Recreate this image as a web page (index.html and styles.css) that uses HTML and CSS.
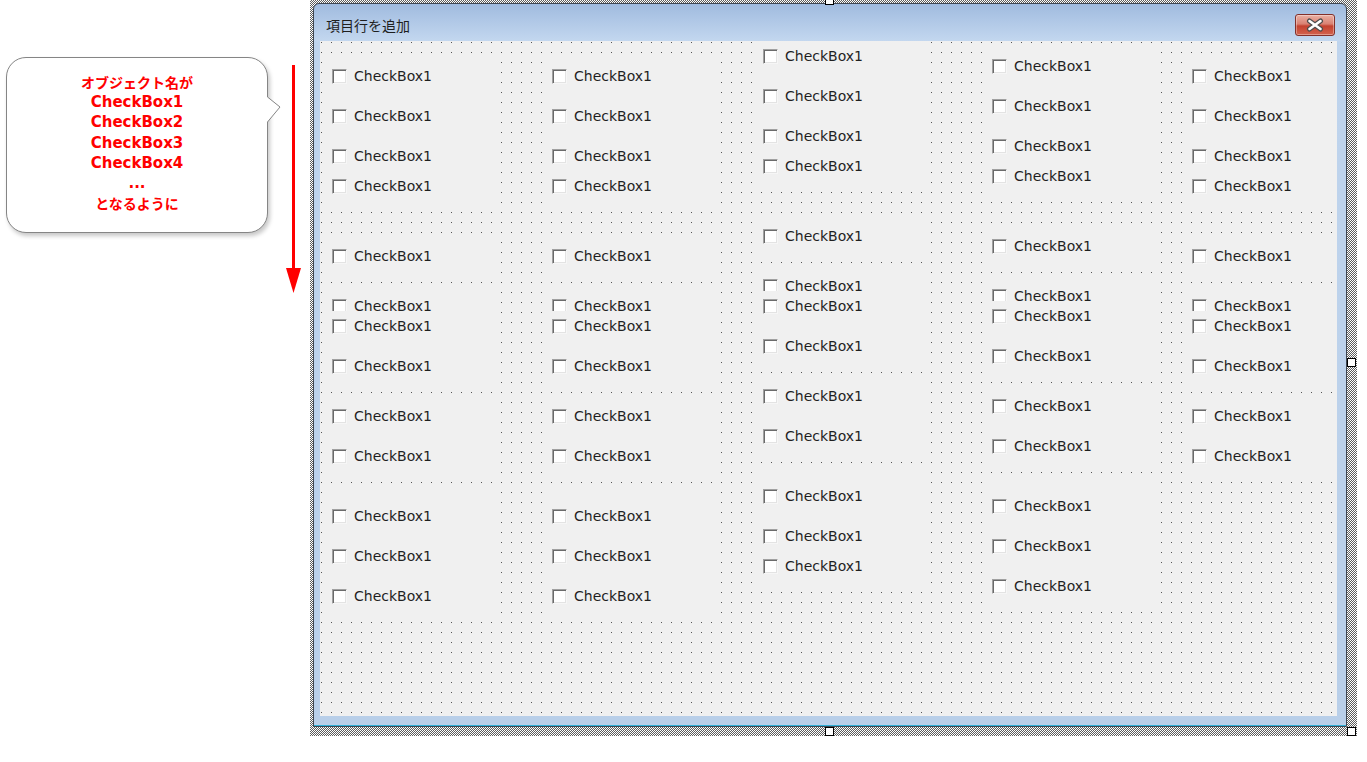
FILE: index.html
```html
<!DOCTYPE html>
<html>
<head>
    <meta charset="utf-8">
    <title>項目行を追加</title>
    <link rel="stylesheet" href="styles.css">
</head>
<body>
    <div class="note">
        <div class="callout">
            <div class="jp">オブジェクト名が</div>
            <div>CheckBox1</div>
            <div>CheckBox2</div>
            <div>CheckBox3</div>
            <div>CheckBox4</div>
            <div>...</div>
            <div class="jp">となるように</div>
            <svg class="tail" width="18" height="30" viewBox="0 0 18 30">
                <polygon points="0,2.5 3.5,2 16,12 3.5,27 0,27" fill="#fff"/>
                <polyline points="3.5,2 16,12 3.5,27" fill="none" stroke="#858585" stroke-width="1"/>
            </svg>
        </div>
        <svg class="arrow" width="22" height="240" viewBox="0 0 22 240">
            <rect x="9" y="5" width="3" height="205" fill="#ff0000"/>
            <polygon points="3,208 18,208 10.5,233" fill="#ff0000"/>
        </svg>
    </div>
    <div class="selection">
        <div class="handle top-mid"></div>
        <div class="handle right-mid"></div>
        <div class="handle bottom-mid"></div>
        <div class="handle bottom-right"></div>
        <div class="window">
            <div class="titlebar">
                <span class="caption">項目行を追加</span>
                <div class="close">
                    <svg width="38" height="20" viewBox="0 0 38 20">
                        <path d="M13.5 6 L24.5 14 M24.5 6 L13.5 14" stroke="#4d4d4d" stroke-width="5" stroke-linecap="round"/>
                        <path d="M13.5 6 L24.5 14 M24.5 6 L13.5 14" stroke="#fff" stroke-width="2.6" stroke-linecap="round"/>
                    </svg>
                </div>
            </div>
            <div id="client" class="client"></div>
        </div>
    </div>
    <script>
        // page y coordinates: [top, bottom, [checkbox centers]]
        var columns=[
            {left:3, frames:[[55,208,[76,116,156,186]],[235,278,[256]],[285,311,[306]],[311,387,[326,366]],[395,476,[416,456]],[485,616,[516,556,596]]]},
            {left:223, frames:[[55,208,[76,116,156,186]],[235,278,[256]],[285,311,[306]],[311,387,[326,366]],[395,476,[416,456]],[485,616,[516,556,596]]]},
            {left:434, frames:[[35,188,[56,96,136,166]],[215,258,[236]],[265,291,[286]],[291,367,[306,346]],[375,456,[396,436]],[465,590,[496,536,566]]]},
            {left:663, frames:[[45,198,[66,106,146,176]],[225,268,[246]],[275,301,[296]],[301,377,[316,356]],[385,466,[406,446]],[475,604,[506,546,586]]]},
            {left:863, frames:[[55,208,[76,116,156,186]],[235,278,[256]],[285,311,[306]],[311,387,[326,366]],[395,476,[416,456]]]}
        ];
        var client=document.getElementById("client");
        var top_of_client=41;
        for(var i=0;i<columns.length;i++){
            var col=columns[i];
            for(var j=0;j<col.frames.length;j++){
                var f=col.frames[j];
                var frame=document.createElement("div");
                frame.className="frame";
                frame.style.left=col.left+"px";
                frame.style.top=(f[0]-top_of_client)+"px";
                frame.style.height=(f[1]-f[0])+"px";
                for(var k=0;k<f[2].length;k++){
                    var cb=document.createElement("div");
                    cb.className="checkbox";
                    cb.style.top=(f[2][k]-f[0]-7)+"px";
                    cb.innerHTML='<span class="box"></span><span class="label">CheckBox1</span>';
                    frame.appendChild(cb);
                }
                client.appendChild(frame);
            }
        }
    </script>
</body>
</html>
```

FILE: styles.css
```css
body{
    margin: 0;
    background: #fff;
    display: flex;
    height: 762px;
    overflow: hidden;
}
.note{
    position: relative;
    width: 310px;
    flex-shrink: 0;
}
.callout{
    position: absolute;
    left: 6px;
    top: 57px;
    width: 262px;
    height: 176px;
    box-sizing: border-box;
    border: 1px solid #858585;
    border-radius: 20px;
    background: #fff;
    box-shadow: 2px 3px 4px rgba(0,0,0,0.22);
    padding-top: 14px;
    text-align: center;
    color: #ff0000;
    font-family: "DejaVu Sans", "Noto Sans CJK JP", sans-serif;
    font-weight: bold;
    font-size: 15px;
    line-height: 20.2px;
}
.callout .jp{
    font-family: "Noto Sans CJK JP", sans-serif;
    font-size: 14px;
    height: 20.2px;
}
.tail{
    position: absolute;
    left: 257px;
    top: 37px;
}
.arrow{
    position: absolute;
    left: 283px;
    top: 60px;
}
.selection{
    position: relative;
    width: 1047px;
    height: 736px;
    box-sizing: border-box;
    padding: 3px 10px 9px 3px;
    background-image: repeating-conic-gradient(#5e5e5e 0 25%, #ffffff 0 50%);
    background-size: 2px 2px;
    flex-shrink: 0;
}
.handle{
    position: absolute;
    width: 7px;
    height: 7px;
    border: 1px solid #000;
    background: #fff;
}
.top-mid{ left: 515px; top: -4px; }
.right-mid{ left: 1037px; top: 358px; }
.bottom-mid{ left: 515px; top: 727px; }
.bottom-right{ left: 1037px; top: 727px; }
.window{
    height: 100%;
    box-sizing: border-box;
    display: flex;
    flex-direction: column;
    border: 1px solid #3f4650;
    border-radius: 6px 6px 0 0;
    background: linear-gradient(to bottom, #a0bbdf 0, #c3d7ef 37px, #bfd4ed 38px, #b9cfe9 100%);
    box-shadow: inset 0 -1px 0 #2fb0d8;
}
.titlebar{
    height: 37px;
    display: flex;
    align-items: flex-start;
    flex-shrink: 0;
}
.caption{
    margin-top: 12px;
    padding-left: 12px;
    font-family: "Noto Sans CJK JP", sans-serif;
    font-size: 14px;
    line-height: 18px;
    color: #1e1e1e;
}
.close{
    margin-left: auto;
    margin-top: 10px;
    margin-right: 11px;
    width: 38px;
    height: 20px;
    border: 1px solid #83302a;
    border-radius: 3px;
    background: linear-gradient(to bottom, #eab0a4 0, #d98172 45%, #c4412f 55%, #d2634e 100%);
    box-shadow: inset 0 0 0 1px rgba(255,255,255,0.35);
}
.close svg{
    display: block;
}
.client{
    position: relative;
    flex: 1;
    margin: 0 9px 10px 6px;
    overflow: hidden;
    background-color: #555555;
    background-image: linear-gradient(to right, #f0f0f0 1px, transparent 1px, transparent 2px, #f0f0f0 2px),
                      linear-gradient(to bottom, #f0f0f0 1px, transparent 1px, transparent 2px, #f0f0f0 2px);
    background-size: 10px 10px;
}
.frame{
    position: absolute;
    width: 176px;
    background: #f0f0f0;
    overflow: hidden;
}
.checkbox{
    position: absolute;
    left: 9px;
    display: flex;
    align-items: center;
    height: 15px;
}
.box{
    width: 13px;
    height: 13px;
    background: #fff;
    border: 1px solid;
    border-color: #a0a0a0 #f6f6f6 #f6f6f6 #a0a0a0;
    box-shadow: inset 1px 1px 0 #6a6a6a, inset -1px -1px 0 #e3e3e3;
}
.label{
    margin-left: 7px;
    font-family: "DejaVu Sans", sans-serif;
    font-size: 14px;
    line-height: 15px;
    color: #1f1f1f;
    white-space: nowrap;
}
```
